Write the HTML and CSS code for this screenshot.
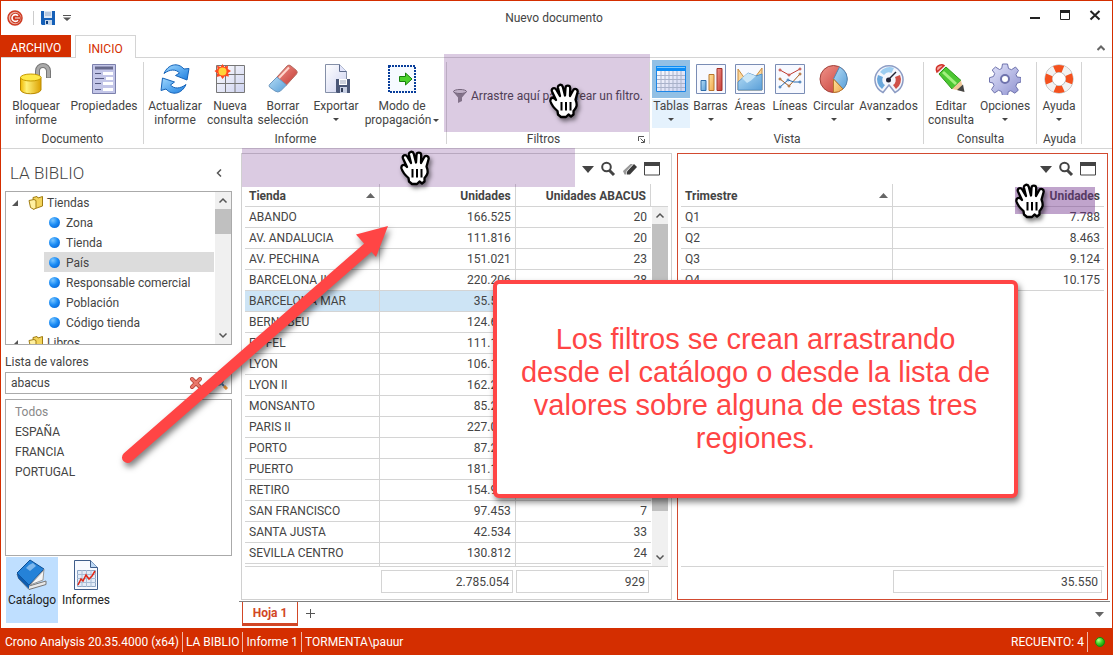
FILE: index.html
```html
<!DOCTYPE html>
<html lang="es">
<head>
<meta charset="utf-8">
<title>Nuevo documento</title>
<link rel="stylesheet" href="styles.css">
</head>
<body>
<svg class="defs" width="0" height="0" aria-hidden="true">
  <defs>
    <linearGradient id="gold" x1="0" x2="1"><stop offset="0" stop-color="#f0b800"/><stop offset=".3" stop-color="#fff27a"/><stop offset="1" stop-color="#dca000"/></linearGradient>
    <linearGradient id="blue" x1="0" y1="0" x2="1" y2="1"><stop offset="0" stop-color="#9fd8ff"/><stop offset="1" stop-color="#1d7fe0"/></linearGradient>
    <linearGradient id="lilac" x1="0" y1="0" x2="1" y2="1"><stop offset="0" stop-color="#ffffff"/><stop offset="1" stop-color="#cdd2f0"/></linearGradient>
    <linearGradient id="gear" x1="0" y1="0" x2="1" y2="1"><stop offset="0" stop-color="#e4e6fb"/><stop offset="1" stop-color="#8d90cf"/></linearGradient>
    <linearGradient id="red" x1="0" y1="0" x2="1" y2="1"><stop offset="0" stop-color="#f0938a"/><stop offset="1" stop-color="#c43a34"/></linearGradient>
    <linearGradient id="orange" x1="0" y1="0" x2="1" y2="1"><stop offset="0" stop-color="#ffe3a0"/><stop offset="1" stop-color="#f0a84c"/></linearGradient>
    <linearGradient id="sky" x1="0" y1="0" x2="1" y2="1"><stop offset="0" stop-color="#b4dcf5"/><stop offset="1" stop-color="#5a9fd8"/></linearGradient>
    <radialGradient id="led" cx=".35" cy=".3" r=".8"><stop offset="0" stop-color="#b8ff8a"/><stop offset=".5" stop-color="#3fd024"/><stop offset="1" stop-color="#158a08"/></radialGradient>
    <symbol id="hand" viewBox="0 0 34 36">
      <path d="M10 31.500L9.500 28C6 25 3.500 22 2.500 18.500C1.800 15.500 4.500 14 6.500 15.500L8 17L4 8.500C2.800 5.500 6.500 3.800 8.200 6.500L12 13L10 5C9.300 1.500 13.800.500 14.800 3.800L17 12.500L17.500 5C17.700 1.800 22 1.800 22.200 5L22 13L25 7.500C26.500 4.500 30.500 6.200 29.500 9.500L27.500 16.500C30 23 28 25 25.500 28V31.500L23 33.500L20.500 31.500L18 34H13Z" fill="#fff" stroke="#000" stroke-width="2.300" stroke-linejoin="round"/>
      <path d="M13.500 19v8.500M18 19v8.500M22.500 19v8.500" stroke="#000" stroke-width="2" fill="none"/>
    </symbol>
    <symbol id="folder" viewBox="0 0 16 16">
      <path d="M5 2.500L9 1.500L10 3L14.500 1.500V11L6 14Z" fill="#f3d45c" stroke="#a17d12"/>
      <path d="M1 5.500L6 4.500L8 5.500V12.500L6 14.500L2.500 12.500Z" fill="#fff0a0" stroke="#a17d12"/>
    </symbol>
    <symbol id="find" viewBox="0 0 16 16">
      <circle cx="6.500" cy="6" r="4.300" fill="none" stroke="#444" stroke-width="2"/><path d="M9.500 9.500L14 14" stroke="#444" stroke-width="3"/>
    </symbol>
    <symbol id="frame" viewBox="0 0 16 16">
      <path d="M.500 1.500h15v12.500h-15z" fill="#fff" stroke="#444"/><path d="M0 1h16v4H0z" fill="#444"/>
    </symbol>
  </defs>
</svg>

<div class="window">
  <header class="titlebar">
    <div class="quick">
      <svg width="16" height="16" viewBox="0 0 16 16"><circle cx="8" cy="8" r="7" fill="#e9b5a8" stroke="#cf3a22" stroke-width="1.500"/><circle cx="8.500" cy="8" r="5.300" fill="#cf3a22"/><path d="M11 5.800A3.400 3.400 0 1 0 11 10.200" fill="none" stroke="#fff" stroke-width="1.600"/><path d="M8 8h5" stroke="#e9b5a8" stroke-width="1.500"/></svg>
      <span class="quick-sep"></span>
      <button class="plain" aria-label="Guardar"><svg width="14" height="14" viewBox="0 0 14 14"><path d="M0 0h14v14H1L0 13z" fill="#1560b8"/><path d="M3 0h8v7H3z" fill="#dfe9f5"/><path d="M4 2h6M4 4h6" stroke="#8fa8c8"/><path d="M4 9h7v5H4z" fill="#c8d8ea"/><path d="M5 10h2v3H5z" fill="#0c3e80"/></svg></button>
      <button class="plain" aria-label="Personalizar"><svg width="8" height="6" viewBox="0 0 8 6"><path d="M0 0h8v1H0zM0 2.500h8L4 6z" fill="#555"/></svg></button>
    </div>
    <h1 class="doc-title">Nuevo documento</h1>
    <div class="win-controls">
      <button class="plain" aria-label="Minimizar"><svg width="12" height="12" viewBox="0 0 12 12"><path d="M1 8h10v2H1z" fill="#222"/></svg></button>
      <button class="plain" aria-label="Maximizar"><svg width="12" height="12" viewBox="0 0 12 12"><path d="M1.500 1.500h9v9h-9z" fill="none" stroke="#222"/><path d="M1 1h10v3H1z" fill="#222"/></svg></button>
      <button class="plain" aria-label="Cerrar"><svg width="12" height="12" viewBox="0 0 12 12"><path d="M1.500 2L10.500 10.500M10.500 2L1.500 10.500" stroke="#222" stroke-width="2"/></svg></button>
    </div>
  </header>

  <nav class="tabs">
    <button class="tab tab-file">ARCHIVO</button>
    <button class="tab tab-home">INICIO</button>
    <button class="plain tabs-collapse" aria-label="Contraer"><svg width="8" height="6" viewBox="0 0 8 6"><path d="M.500 5L4 1.500L7.500 5" fill="none" stroke="#666" stroke-width="2"/></svg></button>
  </nav>

  <section class="ribbon">
    <div class="group g-doc">
      <div class="tools">
        <button class="tool w60"><svg class="ico" viewBox="0 0 32 32"><path d="M17.500 15V8a5.500 5.500 0 0 1 11 0V15" fill="none" stroke="#777" stroke-width="5"/><path d="M17.500 14V8a5.500 5.500 0 0 1 11 0V14.500" fill="none" stroke="#aaa" stroke-width="3"/><path d="M.500 14.500V27C2 32 19 32 21 27V14.500Z" fill="url(#gold)" stroke="#b98a00"/><ellipse cx="10.800" cy="14.500" rx="10.300" ry="3.500" fill="#ffe94a" stroke="#c79a00"/></svg><span>Bloquear<br>informe</span></button>
        <button class="tool w76"><svg class="ico" viewBox="0 0 32 32"><path d="M4.500 1.500h23v29h-23z" fill="#c3c6e8" stroke="#7c80ac"/><path d="M7 3.500h18v3H7z" fill="#66698c"/><path d="M15 9h10v3H15zM18 14h7v3h-7zM15 19h10v3H15zM15 25h10v3H15z" fill="#fff"/><path d="M7 10.500h6M7 15.500h9M7 20.500h6M7 26.500h6" stroke="#555980"/></svg><span>Propiedades</span></button>
      </div>
      <h2 class="group-name">Documento</h2>
    </div>
    <div class="group g-inf">
      <div class="tools">
        <button class="tool w56"><svg class="ico" viewBox="0 0 32 32"><path d="M5 10.500C9 1 19-1 25 6L30 5.500L28 17L16.500 12.500L20.500 10C17 6 11 6 5 10.500Z" fill="url(#blue)" stroke="#1663b8"/><path d="M27 21.500C23 31 13 33 7 26L2 27.500L3.500 15L15.500 19L11.500 22C15 26 21 26 27 21.500Z" fill="url(#blue)" stroke="#1663b8"/></svg><span>Actualizar<br>informe</span></button>
        <button class="tool w54"><svg class="ico" viewBox="0 0 32 32"><path d="M2.500 2.500h28v27h-28z" fill="url(#lilac)" stroke="#777"/><path d="M11.500 2v28M21 2v28M2 11.500h29M2 20.500h29" stroke="#777"/><path d="M8.500 1L10.500 4L14 2.500L13.800 6L17 8L14 10L15 13.500L11 13L8.500 16L6.500 13L2.500 14L3.500 10.500L.500 8L3.500 6L3 2.500L6.500 4Z" fill="#ff4a20"/><circle cx="8.500" cy="8.500" r="4" fill="#ffd43a"/></svg><span>Nueva<br>consulta</span></button>
        <button class="tool w52"><svg class="ico" viewBox="0 0 32 32"><path d="M10 14L20 3Q22 1 24 3L29.500 7.500Q31 9 29.500 11L19.500 22Z" fill="url(#red)" stroke="#b56a60"/><path d="M10 14L19.500 22L13.500 28Q11 30 8 28L2.500 24Q1.500 22.500 3 21Z" fill="url(#sky)" stroke="#6d98c0"/><path d="M12 15L22 4.500" stroke="#ffd6cc" stroke-width="2"/></svg><span>Borrar<br>selección</span></button>
        <button class="tool w54"><svg class="ico" viewBox="0 0 32 32"><path d="M5.500 1.500h14l7 7v21h-21z" fill="url(#lilac)" stroke="#8590a8"/><path d="M19.500 1.500v7h7" fill="#e2e5fa" stroke="#5d6b8c"/><path d="M16 16h14v14H17l-1-1z" fill="#4b5878"/><path d="M19 16h8v6h-8z" fill="#fff"/><path d="M20 18h6M20 20h6" stroke="#9aa4bb"/><path d="M20 24h7v6h-7z" fill="#c8d0e4"/><path d="M21 25h2v4h-2z" fill="#303c58"/></svg><span>Exportar</span><i class="caret"></i></button>
        <button class="tool w78"><svg class="ico" viewBox="0 0 32 32"><path d="M3 3h26v26H3z" fill="#f6faff" stroke="#083d9a" stroke-width="2" stroke-dasharray="2 1"/><path d="M13.500 13.500h6V10L26 16l-6.500 6v-3.500h-6z" fill="#4cd22c" stroke="#16800c"/></svg><span>Modo de<br>propagación<i class="caret inline"></i></span></button>
      </div>
      <h2 class="group-name">Informe</h2>
    </div>
    <div class="group g-fil">
      <div class="tools filter-drop">
        <svg width="14" height="14" viewBox="0 0 14 14"><path d="M0 2.500L5 8.500V14L9 12V8.500L14 2.500Z" fill="#888"/><ellipse cx="7" cy="2.500" rx="6.500" ry="2" fill="#ddd" stroke="#777"/></svg>
        <span>Arrastre aquí para crear un filtro.</span>
      </div>
      <h2 class="group-name">Filtros</h2>
      <svg class="launcher" width="7" height="7" viewBox="0 0 7 7"><path d="M.500 5V.500H6M2.500 2.500L6 6M6.500 3v3.500H3" fill="none" stroke="#555"/></svg>
      <div class="zone zone-filter"></div>
      <svg class="hand hand-filter"><use href="#hand"/></svg>
    </div>
    <div class="group g-vis">
      <div class="tools">
        <button class="tool w38 active"><svg class="ico" viewBox="0 0 32 32"><path d="M1.500 3.500h29v25h-29z" fill="url(#lilac)" stroke="#1c86e8"/><path d="M6 8v20M10 8v20M14 8v20M18 8v20M22 8v20M26 8v20M2 12.500h28M2 16.500h28M2 20.500h28M2 24.500h28" stroke="#a9b2ca"/><path d="M1 3h30v5H1z" fill="#0c8cf5"/><path d="M2 4h28v1H2z" fill="#7cc8ff"/></svg><span>Tablas</span><i class="caret"></i></button>
        <button class="tool w41"><svg class="ico" viewBox="0 0 32 32"><path d="M1.500 1.500h29v29h-29z" fill="#f7f9ff" stroke="#7a8db5"/><path d="M6 17.500h5v10H6z" fill="url(#sky)" stroke="#2f6da8"/><path d="M14 11.500h5v16h-5z" fill="url(#orange)" stroke="#b8762c"/><path d="M22 5.500h5v22h-5z" fill="url(#red)" stroke="#a03028"/></svg><span>Barras</span><i class="caret"></i></button>
        <button class="tool w38"><svg class="ico" viewBox="0 0 32 32"><path d="M1.500 1.500h29v29h-29z" fill="#f7f9ff" stroke="#7a8db5"/><path d="M4 6L14 20L22 13L28 5V27H4Z" fill="#fbd79c" stroke="#c98d3f"/><path d="M4 19L14 10L22 13L28 11V27H4Z" fill="url(#sky)" stroke="#5592c8"/><path d="M8 15L14 10L22 13L17 17.500L13 20Z" fill="#c9e6f8"/></svg><span>Áreas</span><i class="caret"></i></button>
        <button class="tool w42"><svg class="ico" viewBox="0 0 32 32"><path d="M1.500 1.500h29v29h-29z" fill="#f7f9ff" stroke="#7a8db5"/><path d="M6 7L15 12L26 6" fill="none" stroke="#c0392f"/><path d="M6 16L15 23L26 11" fill="none" stroke="#a65a18"/><path d="M6 24L14 17L20 19L26 19" fill="none" stroke="#2b6cb0"/><g fill="#fff" stroke="#c0392f"><circle cx="6" cy="7" r="1"/><circle cx="15" cy="12" r="1"/><circle cx="26" cy="6" r="1"/></g><g fill="#fff" stroke="#a65a18"><circle cx="6" cy="16" r="1"/><circle cx="15" cy="23" r="1"/><circle cx="26" cy="11" r="1"/></g><g fill="#fff" stroke="#2b6cb0"><circle cx="6" cy="24" r="1"/><circle cx="14" cy="17" r="1"/><circle cx="26" cy="19" r="1"/></g></svg><span>Líneas</span><i class="caret"></i></button>
        <button class="tool w45"><svg class="ico" viewBox="0 0 32 32"><circle cx="15.500" cy="16" r="13.500" fill="url(#red)" stroke="#a04038"/><path d="M15.500 16L21.500 4A13.500 13.500 0 0 1 25 26Z" fill="url(#sky)" stroke="#4c88b8"/><path d="M15.500 16L25 26A13.500 13.500 0 0 1 15.500 29.500Z" fill="url(#orange)" stroke="#b8762c"/></svg><span>Circular</span><i class="caret"></i></button>
        <button class="tool w65"><svg class="ico" viewBox="0 0 32 32"><path d="M10 29.500A14 14 0 1 1 22 29.500L16 22Z" fill="#f4f6fc" stroke="#8c9cc4" stroke-width="1.500"/><path d="M9 26A11.500 11.500 0 0 1 5 12L10 14A6 6 0 0 0 12 22Z" fill="#6aa8dc"/><path d="M7 9A11.500 11.500 0 0 1 21 5L18.500 10A6 6 0 0 0 11 12Z" fill="#9dcdf0"/><path d="M27 12A11.500 11.500 0 0 1 23 26L20 22A6 6 0 0 0 22 14Z" fill="#cf5048"/><path d="M15 17L23 9" stroke="#223" stroke-width="1.500"/><circle cx="15.500" cy="17" r="2.500" fill="#223"/></svg><span>Avanzados</span><i class="caret"></i></button>
      </div>
      <h2 class="group-name">Vista</h2>
    </div>
    <div class="group g-con">
      <div class="tools">
        <button class="tool w50"><svg class="ico" viewBox="0 0 32 32"><path d="M2 9L9 2.500L12 5L5 12Z" fill="#e8e8e8"/><path d="M2 9Q0 4 4 2.500Q7 1 9 2.500Z" fill="#f5a8a0" stroke="#d03028" stroke-width="1.500"/><path d="M4 11L11 4L26 17.500L17 26Z" fill="#4cc832" stroke="#2f9a1c"/><path d="M8 9L21 21" stroke="#a4f080" stroke-width="3"/><path d="M17 26L26 17.500L29 28.500Z" fill="#f0c898"/><path d="M22 27L28 21.500L29.500 29Z" fill="#444"/></svg><span>Editar<br>consulta</span></button>
        <button class="tool w58"><svg class="ico" viewBox="0 0 32 32"><path d="M13.500 1h5l1 4.500l3 1.200l4-2.700l3 3.500l-2.500 4l1 2.500l4 .5v4.500l-4 1.200l-1.200 3l2.500 4l-3.500 3l-4-2.500l-2.500 1l-.8 4h-5l-1-4.200l-3-1.200l-4 2.700l-3-3.500l2.500-4l-1-2.500l-3.500-.8v-4.500l4-1.200l1.200-3L3.200 7l3.300-3l4 2.500l2.200-1Z" fill="url(#gear)" stroke="#6f73ad"/><circle cx="16" cy="16" r="4" fill="#fff" stroke="#6f73ad" stroke-width="2"/></svg><span>Opciones</span><i class="caret"></i></button>
      </div>
      <h2 class="group-name">Consulta</h2>
    </div>
    <div class="group g-ayu">
      <div class="tools">
        <button class="tool w44"><svg class="ico" viewBox="0 0 32 32"><circle cx="16" cy="16" r="10.500" fill="none" stroke="#aaa" stroke-width="8"/><circle cx="16" cy="16" r="10.500" fill="none" stroke="#f2f2f2" stroke-width="7"/><circle cx="16" cy="16" r="10.500" fill="none" stroke="#f4511e" stroke-width="7" stroke-dasharray="8.500 8" transform="rotate(-115 16 16)"/></svg><span>Ayuda</span><i class="caret"></i></button>
      </div>
      <h2 class="group-name">Ayuda</h2>
    </div>
  </section>

  <main class="main">
    <aside class="sidebar">
      <div class="side-head"><h2 class="side-title">LA BIBLIO</h2><button class="plain" aria-label="Ocultar"><svg width="6" height="8" viewBox="0 0 6 8"><path d="M5 .500L1.500 4L5 7.500" fill="none" stroke="#555" stroke-width="1.500"/></svg></button></div>
      <div class="tree">
        <ul class="tree-list">
          <li class="node"><svg class="twisty" width="7" height="7" viewBox="0 0 7 7"><path d="M7 1v6H1z" fill="#555"/></svg><svg width="16" height="16"><use href="#folder"/></svg>Tiendas</li>
          <li class="leaf"><i class="dot"></i>Zona</li>
          <li class="leaf"><i class="dot"></i>Tienda</li>
          <li class="leaf selected"><i class="dot"></i>País</li>
          <li class="leaf"><i class="dot"></i>Responsable comercial</li>
          <li class="leaf"><i class="dot"></i>Población</li>
          <li class="leaf"><i class="dot"></i>Código tienda</li>
          <li class="node"><svg class="twisty" width="7" height="7" viewBox="0 0 7 7"><path d="M7 1v6H1z" fill="#555"/></svg><svg width="16" height="16"><use href="#folder"/></svg>Libros</li>
        </ul>
        <div class="scroll"><svg class="sc-btn" viewBox="0 0 16 16"><path d="M4.500 10L8 6.500L11.500 10" fill="none" stroke="#555" stroke-width="1.500"/></svg><div class="thumb thumb-tree"></div><svg class="sc-btn sc-end" viewBox="0 0 16 16"><path d="M4.500 6L8 9.500L11.500 6" fill="none" stroke="#555" stroke-width="1.500"/></svg></div>
      </div>
      <label class="list-label" for="valor">Lista de valores</label>
      <div class="search">
        <input id="valor" type="text" value="abacus">
        <svg width="14" height="14" viewBox="0 0 14 14"><path d="M3 3L11 11M11 3L3 11" stroke="#b23a30" stroke-width="4" stroke-linecap="round"/><path d="M3 3L11 11M11 3L3 11" stroke="#e8776a" stroke-width="2.500" stroke-linecap="round"/></svg>
        <svg width="14" height="14" viewBox="0 0 14 14"><circle cx="5" cy="5" r="4" fill="#cfe6f8" stroke="#7b92a8" stroke-width="1.500"/><path d="M8 8L10 10" stroke="#4a7ab0" stroke-width="2"/><path d="M10 10L13 13" stroke="#e8963a" stroke-width="3"/></svg>
      </div>
      <ul class="values">
        <li class="muted">Todos</li><li>ESPAÑA</li><li>FRANCIA</li><li>PORTUGAL</li>
      </ul>
      <div class="switcher">
        <button class="view on"><svg class="ico" viewBox="0 0 32 32"><path d="M1 15L13 27L30 22V25.500L13 30.500L3 20Z" fill="#e8e8e8" stroke="#777"/><path d="M1 14L14 1L28 10L13 26Z" fill="#2582d8" stroke="#0d4f96"/><path d="M1 14L13 26V30L2 19Z" fill="#0f5cae"/><path d="M13 6L17 4L20 7L14 12L10 9Z" fill="#7fb8ec"/><path d="M28 10L27 21L14 26L28 11" fill="#f5f5f5" stroke="#999"/></svg><span>Catálogo</span></button>
        <button class="view"><svg class="ico" viewBox="0 0 32 32"><path d="M4.500 1.500h16l7 7v22h-23z" fill="#f8faff" stroke="#3f5d8a"/><path d="M20.500 1.500v7h7" fill="#bcd8f5" stroke="#3f5d8a"/><path d="M7.500 11.500h18v16h-18z" fill="#e3ecf8" stroke="#8ea6c4"/><path d="M12 11v17M16.500 11v17M21 11v17M7 15.500h19M7 19.500h19M7 23.500h19" stroke="#a9bdd6"/><path d="M8 26L11 20L13 22L16 16L19 20L22 17L25 12" fill="none" stroke="#e02818" stroke-width="1.500"/></svg><span>Informes</span></button>
      </div>
    </aside>

    <div class="work">
      <div class="panels">
        <section class="panel">
          <div class="panel-tools">
            <button class="plain" aria-label="Menú"><svg width="12" height="7" viewBox="0 0 12 7"><path d="M0 0h12L6 7z" fill="#444"/></svg></button>
            <button class="plain" aria-label="Buscar"><svg width="16" height="16"><use href="#find"/></svg></button>
            <button class="plain" aria-label="Borrar"><svg width="16" height="16" viewBox="0 0 16 16"><path d="M1 10L8.500 3H11L4.500 10V13.500H2.500Z" fill="#999"/><path d="M5 10.500L12 3L15 6L8 13.500H5Z" fill="#3a3a3a"/></svg></button>
            <button class="plain" aria-label="Ampliar"><svg width="16" height="16"><use href="#frame"/></svg></button>
          </div>
          <div class="grid">
            <div class="grid-rows">
              <table class="data">
                <thead><tr><th class="txt">Tienda<svg class="sort" width="9" height="5" viewBox="0 0 9 5"><path d="M0 5h9L4.500 0z" fill="#666"/></svg></th><th>Unidades</th><th>Unidades ABACUS</th></tr></thead>
                <tbody>
                  <tr><td class="txt">ABANDO</td><td>166.525</td><td>20</td></tr>
                  <tr><td class="txt">AV. ANDALUCIA</td><td>111.816</td><td>20</td></tr>
                  <tr><td class="txt">AV. PECHINA</td><td>151.021</td><td>23</td></tr>
                  <tr><td class="txt">BARCELONA II</td><td>220.206</td><td>28</td></tr>
                  <tr class="picked"><td class="txt">BARCELONA MAR</td><td>35.550</td><td></td></tr>
                  <tr><td class="txt">BERNABEU</td><td>124.600</td><td></td></tr>
                  <tr><td class="txt">EIFFEL</td><td>111.100</td><td></td></tr>
                  <tr><td class="txt">LYON</td><td>106.100</td><td></td></tr>
                  <tr><td class="txt">LYON II</td><td>162.200</td><td></td></tr>
                  <tr><td class="txt">MONSANTO</td><td>85.200</td><td></td></tr>
                  <tr><td class="txt">PARIS II</td><td>227.000</td><td></td></tr>
                  <tr><td class="txt">PORTO</td><td>87.200</td><td></td></tr>
                  <tr><td class="txt">PUERTO</td><td>181.100</td><td></td></tr>
                  <tr><td class="txt">RETIRO</td><td>154.900</td><td></td></tr>
                  <tr><td class="txt">SAN FRANCISCO</td><td>97.453</td><td>7</td></tr>
                  <tr><td class="txt">SANTA JUSTA</td><td>42.534</td><td>33</td></tr>
                  <tr><td class="txt">SEVILLA CENTRO</td><td>130.812</td><td>24</td></tr>
                  <tr><td class="txt"></td><td></td><td></td></tr>
                </tbody>
              </table>
            </div>
            <div class="grid-side">
              <div class="grid-corner"></div>
              <div class="scroll"><svg class="sc-btn" viewBox="0 0 16 16"><path d="M4.500 10L8 6.500L11.500 10" fill="none" stroke="#555" stroke-width="1.500"/></svg><div class="thumb thumb-grid"></div><svg class="sc-btn sc-end" viewBox="0 0 16 16"><path d="M4.500 6L8 9.500L11.500 6" fill="none" stroke="#555" stroke-width="1.500"/></svg></div>
            </div>
          </div>
          <div class="totals totals-3"><span></span><output>2.785.054</output><output>929</output></div>
          <div class="zone zone-panel"></div>
          <svg class="hand hand-panel"><use href="#hand"/></svg>
        </section>

        <section class="panel current">
          <div class="panel-tools">
            <button class="plain" aria-label="Menú"><svg width="12" height="7" viewBox="0 0 12 7"><path d="M0 0h12L6 7z" fill="#444"/></svg></button>
            <button class="plain" aria-label="Buscar"><svg width="16" height="16"><use href="#find"/></svg></button>
            <button class="plain" aria-label="Ampliar"><svg width="16" height="16"><use href="#frame"/></svg></button>
          </div>
          <div class="grid">
            <div class="grid-rows">
              <table class="data">
                <thead><tr><th class="txt">Trimestre<svg class="sort" width="9" height="5" viewBox="0 0 9 5"><path d="M0 5h9L4.500 0z" fill="#666"/></svg></th><th class="last">Unidades</th></tr></thead>
                <tbody>
                  <tr><td class="txt">Q1</td><td>7.788</td></tr>
                  <tr><td class="txt">Q2</td><td>8.463</td></tr>
                  <tr><td class="txt">Q3</td><td>9.124</td></tr>
                  <tr><td class="txt">Q4</td><td>10.175</td></tr>
                </tbody>
              </table>
            </div>
          </div>
          <div class="totals totals-2"><span></span><output>35.550</output></div>
          <div class="zone zone-column"></div>
          <svg class="hand hand-column"><use href="#hand"/></svg>
        </section>
      </div>
      <nav class="sheets">
        <button class="sheet">Hoja 1</button>
        <button class="plain" aria-label="Añadir hoja"><svg width="10" height="10" viewBox="0 0 10 10"><path d="M4.500 0v9M0 4.500h9" stroke="#555"/></svg></button>
        <button class="plain sheets-menu" aria-label="Lista de hojas"><svg width="9" height="5" viewBox="0 0 9 5"><path d="M0 0h9L4.500 5z" fill="#666"/></svg></button>
      </nav>
    </div>
  </main>

  <footer class="status">
    <span class="cell">Crono Analysis 20.35.4000 (x64)</span><span class="cell">LA BIBLIO</span><span class="cell">Informe 1</span><span>TORMENTA\pauur</span>
    <span class="cell count">RECUENTO: 4</span>
    <svg class="led" width="10" height="10" viewBox="0 0 10 10"><circle cx="5" cy="5" r="4.500" fill="url(#led)" stroke="#1a8a0a"/></svg>
  </footer>

  <svg class="pointer" viewBox="0 0 290 260" width="290" height="260"><path d="M8.500 238.500L252 26" stroke="#ff4545" stroke-width="11" stroke-linecap="round"/><path d="M269 7L237 15.500L257 38Z" fill="#ff4545"/></svg>
  <div class="callout"><p>Los filtros se crean arrastrando desde el catálogo o desde la lista de valores sobre alguna de estas tres regiones.</p></div>
</div>
</body>
</html>
```

FILE: styles.css
```css
* { box-sizing: border-box; }
body { margin: 0; background: #fff; color: #444; font: 12px/14px Roboto, sans-serif; }
button { font: inherit; color: inherit; border: 0; background: none; padding: 0; }
svg { display: block; flex: none; }
h1, h2, p, ul { margin: 0; padding: 0; font-weight: 400; font-size: inherit; list-style: none; }
.defs { position: absolute; }
.plain { display: flex; align-items: center; justify-content: center; }

.window { position: relative; height: 100vh; min-height: 480px; display: flex; flex-direction: column; border: 1px solid #d42e00; border-bottom: 0; overflow: hidden; }

.titlebar { height: 34px; display: grid; grid-template-columns: 1fr auto 1fr; align-items: center; padding: 0 11px 0 6px; flex: none; }
.quick { display: flex; align-items: center; gap: 8px; }
.quick-sep { width: 1px; height: 14px; margin-left: 2px; margin-right: -1px; background: #ccc; }
.doc-title { font-size: 12px; }
.win-controls { display: flex; justify-content: flex-end; gap: 18px; padding-bottom: 6px; }

.tabs { height: 23px; display: flex; align-items: stretch; border-bottom: 1px solid #d4d4d4; flex: none; }
.tab { padding: 3px 0 0; }
.tab-file { width: 70px; background: #d42e00; color: #fff; }
.tab-home { width: 61px; margin: 0 0 -1px 4px; border: 1px solid #d4d4d4; border-bottom: 0; background: #fff; color: #d42e00; }
.tabs-collapse { margin-left: auto; padding: 4px 7px 0 0; }

.ribbon { height: 91px; display: flex; border-bottom: 1px solid #d4d4d4; padding: 2px 0; flex: none; }
.group { position: relative; display: flex; flex-direction: column; }
.group::after { content: ""; position: absolute; right: 0; top: 2px; bottom: 2px; width: 1px; background: #d4d4d4; }
.g-doc { width: 143px; }
.g-inf { width: 303px; }
.g-fil { width: 203px; }
.g-vis { width: 274px; }
.g-con { width: 113px; }
.g-ayu { width: 45px; }
.tools { display: flex; height: 71px; padding-left: 2px; flex: none; }
.g-doc .tools { padding-left: 5px; }
.g-inf .tools { padding-left: 3px; }
.g-ayu .tools { padding-left: 0; }
.group-name { text-align: center; line-height: 16px; }
.g-fil .group-name { padding-right: 10px; }
.tool { display: flex; flex-direction: column; align-items: center; padding-top: 3px; line-height: 14px; white-space: nowrap; }
.tool > span { margin-top: 4px; }
.ico { width: 32px; height: 32px; }
.caret { display: block; width: 0; height: 0; border: 3px solid transparent; border-top-color: #444; border-bottom: 0; margin-top: 5px; }
.caret.inline { display: inline-block; margin: 0 0 2px 2px; }
.w38 { width: 38px; }
.w41 { width: 41px; }
.w42 { width: 42px; }
.w44 { width: 44px; }
.w45 { width: 45px; }
.w50 { width: 50px; }
.w52 { width: 52px; }
.w54 { width: 54px; }
.w56 { width: 56px; }
.w58 { width: 58px; }
.w60 { width: 60px; }
.w65 { width: 65px; }
.w76 { width: 76px; }
.w78 { width: 78px; }
.active { height: 68px; background: linear-gradient(#92c0e5 38px, #fff 38px, #fff 39px, #e5f2fd 39px); }
.g-fil .filter-drop { align-items: center; gap: 4px; padding-left: 6px; white-space: nowrap; }
.launcher { position: absolute; right: 5px; bottom: 3px; }

.zone { position: absolute; background: rgba(111, 47, 139, .25); }
.hand { position: absolute; width: 34px; height: 36px; filter: drop-shadow(2px 3px 2px rgba(0, 0, 0, .5)); }
.zone-filter { left: -3px; right: 0; top: -6px; height: 78px; }
.hand-filter { left: 101px; top: 23px; }
.zone-panel { left: 0; right: 96px; top: -6px; height: 39px; }
.hand-panel { left: 157px; top: -4px; }
.zone-column { right: 12px; top: 33px; width: 80px; height: 27px; background: rgba(111, 47, 139, .44); }
.hand-column { right: 59px; top: 29px; }

.main { flex: 1; min-height: 0; display: flex; }
.sidebar { width: 238px; padding: 0 7px 5px 4px; display: flex; flex-direction: column; flex: none; }
.side-head { height: 42px; display: flex; align-items: center; justify-content: space-between; padding: 6px 10px 0 5px; flex: none; }
.side-title { font-size: 17px; line-height: 20px; font-weight: 300; }
.tree { height: 154px; display: flex; border: 1px solid #aaa; flex: none; overflow: hidden; }
.tree-list { flex: 1; }
.node, .leaf { height: 20px; display: flex; align-items: center; padding-top: 1px; }
.node { gap: 3px; padding-left: 5px; }
.twisty { margin-right: 7px; }
.leaf { margin-left: 38px; padding-left: 5px; gap: 6px; }
.leaf.selected { background: #dcdcdc; }
.dot { width: 11px; height: 11px; border-radius: 50%; background: radial-gradient(circle at 35% 30%, #7cc6ff, #1b8cf5 45%, #0458c8); }
.scroll { width: 16px; display: flex; flex-direction: column; background: #f0f0f0; margin-left: 1px; }
.sc-btn { width: 16px; height: 17px; }
.sc-end { margin-top: auto; }
.thumb { background: #c0c0c0; }
.thumb-tree { height: 25px; }
.thumb-grid { height: 80%; }
.list-label { padding-top: 4px; height: 27px; line-height: 26px; flex: none; }
.search { height: 22px; display: flex; align-items: center; gap: 11px; border: 1px solid #aaa; padding: 0 3px 0 5px; flex: none; }
.search input { flex: 1; min-width: 0; border: 0; padding: 0; outline: 0; font: inherit; color: inherit; }
.values { flex: 1; min-height: 0; border: 1px solid #aaa; margin: 5px 0 1px; padding: 2px 9px; line-height: 20px; overflow: hidden; }
.muted { color: #888; }
.switcher { display: flex; height: 66px; padding-left: 1px; flex: none; }
.view { width: 52px; display: flex; flex-direction: column; align-items: center; padding-top: 2px; gap: 2px; color: #222; }
.view + .view { width: 56px; }
.view.on { background: #bfdfff; }

.work { flex: 1; min-width: 0; display: flex; flex-direction: column; }
.panels { flex: 1; min-height: 0; display: flex; gap: 5px; padding: 4px 4px 1px 2px; }
.panel { position: relative; flex: 1; min-width: 0; display: flex; flex-direction: column; border: 1px solid #d0d0d0; padding: 0 3px; }
.panel.current { border-color: #d24a30; }
.panel-tools { height: 30px; display: flex; align-items: center; justify-content: flex-end; gap: 6px; padding-right: 8px; flex: none; }
.grid { flex: 1; min-height: 0; display: flex; border-bottom: 1px solid #d4d4d4; }
.grid-rows { flex: 1; min-width: 0; overflow: hidden; }
.data { width: 100%; table-layout: fixed; border-spacing: 0; }
.data th, .data td { height: 21px; line-height: 19px; padding: 1px 4px 0; text-align: right; border-bottom: 1px solid #d4d4d4; border-right: 1px solid #d4d4d4; white-space: nowrap; }
.data th { height: 23px; padding-top: 2px; font-weight: 700; position: relative; }
.data td:last-child, .data .last { border-right: 0; }
.data .txt { text-align: left; }
.picked td { background: #cde4f5; }
.sort { position: absolute; right: 4px; top: 9px; }
.grid-side { width: 17px; display: flex; flex-direction: column; }
.grid-corner { height: 23px; border-bottom: 1px solid #d4d4d4; flex: none; }
.grid-side .scroll { flex: 1; min-height: 0; }
.totals { display: grid; gap: 3px; padding: 3px 2px 6px 0; flex: none; }
.totals-3 { grid-template-columns: 1fr 1fr 1fr; padding-right: 19px; }
.totals-2 { grid-template-columns: 1fr 1fr; }
.totals output { height: 23px; border: 1px solid #d4d4d4; line-height: 23px; padding: 0 3px; text-align: right; }

.sheets { height: 27px; display: flex; border-top: 1px solid #808080; margin-right: 2px; padding: 0 6px 2px 3px; gap: 8px; flex: none; }
.sheet { width: 56px; border: 1px solid #d24726; border-top: 0; border-bottom-width: 3px; color: #d24726; font-weight: 700; }
.sheets-menu { margin-left: auto; }

.status { height: 27px; display: flex; align-items: center; background: #d42e00; color: #fff; padding: 0 7px 0 4px; white-space: nowrap; flex: none; }
.cell { border-right: 1px solid #f0b8a8; line-height: 20px; padding-right: 3px; margin-right: 3px; }
.count { margin-left: auto; margin-right: 7px; }

.pointer { position: absolute; left: 118px; top: 218px; filter: drop-shadow(2px 4px 3px rgba(0, 0, 0, .5)); }
.callout { position: absolute; left: 492px; top: 279px; width: 525px; height: 218px; display: flex; align-items: center; justify-content: center; padding: 0 18px; background: #fff; border: 4px solid #ff4545; border-radius: 6px; box-shadow: 2px 4px 6px rgba(0, 0, 0, .5); }
.callout p { font: 29px/33px "Liberation Sans", Arial, sans-serif; color: #ff4545; text-align: center; }
```
